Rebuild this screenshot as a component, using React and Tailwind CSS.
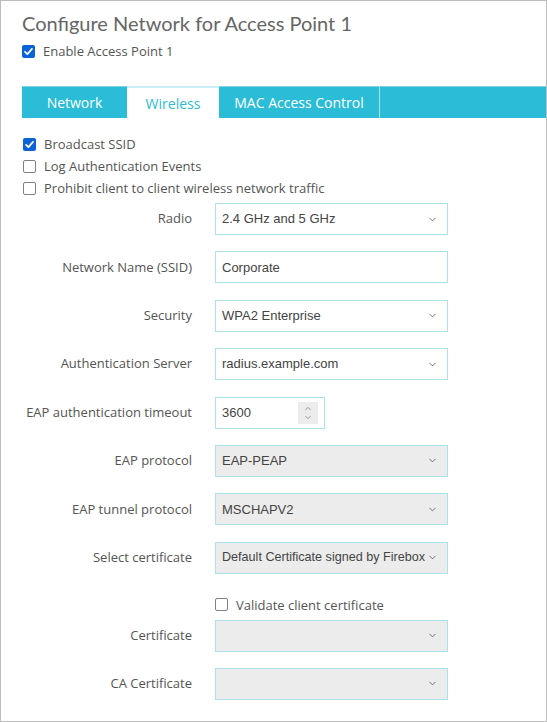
import React from 'react';
import { ChevronDown, ChevronUp } from 'lucide-react';

const sans = { fontFamily: '"Open Sans", "Noto Sans", sans-serif' };

const Check = ({ checked }) =>
  checked ? (
    <span className="w-[13px] h-[13px] rounded-[2px] bg-[#0b63d6] flex items-center justify-center shrink-0">
      <svg viewBox="0 0 12 12" className="w-[11px] h-[11px]">
        <path d="M2.2 6.3 L4.8 8.8 L9.8 3.2" fill="none" stroke="#fff" strokeWidth="1.9" strokeLinecap="round" strokeLinejoin="round" />
      </svg>
    </span>
  ) : (
    <span className="w-[13px] h-[13px] rounded-[2px] border border-[#808080] bg-white shrink-0" />
  );

const CheckRow = ({ checked, label, className = '' }) => (
  <div className={`flex items-center gap-[8px] h-[16px] leading-[16px] text-[13px] text-[#555] ${className}`}>
    <Check checked={checked} />
    <span>{label}</span>
  </div>
);

const Select = ({ value, disabled, small }) => (
  <div
    className={`w-[233px] h-8 border border-[#a9e3ee] flex items-center justify-between pl-[6px] pr-[9px] text-[#444] font-['Liberation_Sans',Arial,sans-serif] ${
      small ? 'text-[12.6px]' : 'text-[13px]'
    } ${disabled ? 'bg-[#ececec]' : 'bg-white'}`}
  >
    <span className="whitespace-nowrap">{value}</span>
    <ChevronDown className="w-[11px] h-[11px] text-[#666] shrink-0" strokeWidth={2} />
  </div>
);

const TextInput = ({ value }) => (
  <div className="w-[233px] h-8 border border-[#a9e3ee] bg-white flex items-center pl-[6px] text-[13px] text-[#444] font-['Liberation_Sans',Arial,sans-serif]">
    {value}
  </div>
);

const NumberInput = ({ value }) => (
  <div className="w-[110px] h-8 border border-[#a9e3ee] bg-white flex items-center justify-between pl-[6px] pr-[6px] text-[13px] text-[#444] font-['Liberation_Sans',Arial,sans-serif]">
    <span>{value}</span>
    <span className="w-[20px] h-[22px] bg-[#ececec] flex flex-col items-center justify-center">
      <ChevronUp className="w-[10px] h-[9px] text-[#777]" strokeWidth={2} />
      <ChevronDown className="w-[10px] h-[9px] text-[#777]" strokeWidth={2} />
    </span>
  </div>
);

const Row = ({ label, children }) => (
  <div className="flex items-center h-8">
    <div className="w-[192px] pr-[1px] text-right text-[13px] text-[#555] shrink-0">{label}</div>
    <div className="ml-[22px]">{children}</div>
  </div>
);

export default function App() {
  return (
    <div className="w-[547px] h-[722px] border border-[#bdbdbd] bg-white overflow-hidden" style={sans}>
      <div className="pl-[21px] pt-[10px]">
        <h1 className="text-[20px] leading-[24px] text-[#666] font-['Lato',sans-serif]">
          Configure Network for Access Point 1
        </h1>
        <CheckRow checked label="Enable Access Point 1" className="mt-[8px] gap-[5px]" />
      </div>

      <div className="ml-[21px] mt-[27px] h-[32px] bg-[#2bbcd7] border-t border-[#7fd5e6] flex text-[14px] text-white">
        <div className="w-[105px] flex items-center justify-center">Network</div>
        <div className="w-[92px] -mt-px border-t-2 border-[#c9eef5] bg-white text-[#2bbcd7] flex items-center justify-center">
          Wireless
        </div>
        <div className="w-[161px] flex items-center justify-center border-r border-[#a9e3ee]">MAC Access Control</div>
        <div className="flex-1" />
      </div>

      <div className="pl-[22px] mt-[18px] flex flex-col gap-[6px]">
        <CheckRow checked label="Broadcast SSID" />
        <CheckRow label="Log Authentication Events" />
        <CheckRow label="Prohibit client to client wireless network traffic" />
      </div>

      <div className="mt-[7px] flex flex-col gap-[16.4px]">
        <Row label="Radio"><Select value="2.4 GHz and 5 GHz" /></Row>
        <Row label="Network Name (SSID)"><TextInput value="Corporate" /></Row>
        <Row label="Security"><Select value="WPA2 Enterprise" /></Row>
        <Row label="Authentication Server"><Select value="radius.example.com" /></Row>
        <Row label="EAP authentication timeout"><NumberInput value="3600" /></Row>
        <Row label="EAP protocol"><Select value="EAP-PEAP" disabled /></Row>
        <Row label="EAP tunnel protocol"><Select value="MSCHAPV2" disabled /></Row>
        <Row label="Select certificate"><Select value="Default Certificate signed by Firebox" disabled small /></Row>
      </div>

      <div className="ml-[214px] mt-[23px]">
        <CheckRow label="Validate client certificate" />
      </div>

      <div className="mt-[7px] flex flex-col gap-[16px]">
        <Row label="Certificate"><Select value="" disabled /></Row>
        <Row label="CA Certificate"><Select value="" disabled /></Row>
      </div>
    </div>
  );
}
